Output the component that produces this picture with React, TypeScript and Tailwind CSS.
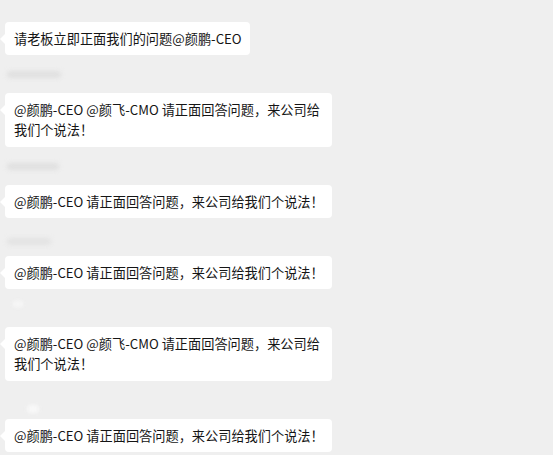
import type { ReactNode } from 'react';

type Msg = {
  lines: string[];
  // blurred sender name that sits above the bubble
  name?: { left: number; top: number; width: number; height: number; tone: string };
  width: string;
};

const MESSAGES: Msg[] = [
  { lines: ['请老板立即正面我们的问题@颜鹏-CEO'], width: 'w-[245px]' },
  {
    lines: ['@颜鹏-CEO @颜飞-CMO 请正面回答问题，来公司给', '我们个说法！'],
    name: { left: 2, top: 16, width: 54, height: 7, tone: 'bg-[#e0e0e0]' },
    width: 'w-[327px]',
  },
  {
    lines: ['@颜鹏-CEO 请正面回答问题，来公司给我们个说法！'],
    name: { left: 2, top: 16, width: 52, height: 7, tone: 'bg-[#e0e0e0]' },
    width: 'w-[327px]',
  },
  {
    lines: ['@颜鹏-CEO 请正面回答问题，来公司给我们个说法！'],
    name: { left: 2, top: 20, width: 44, height: 7, tone: 'bg-[#e3e3e3]' },
    width: 'w-[327px]',
  },
  {
    lines: ['@颜鹏-CEO @颜飞-CMO 请正面回答问题，来公司给', '我们个说法！'],
    name: { left: 8, top: 12, width: 10, height: 6, tone: 'bg-[#f8f8f8]' },
    width: 'w-[327px]',
  },
  {
    lines: ['@颜鹏-CEO 请正面回答问题，来公司给我们个说法！'],
    name: { left: 22, top: 24, width: 12, height: 8, tone: 'bg-[#f9f9f9]' },
    width: 'w-[327px]',
  },
];

function Bubble({ width, double, children }: { width: string; double: boolean; children: ReactNode }) {
  return (
    <div
      className={`relative ${width} bg-white rounded-[4px] pl-[9px] pr-[10px] pt-[7px] ${double ? 'pb-[7px]' : 'pb-[6px]'}`}
    >
      <span className="absolute left-[-5px] top-[12px] w-0 h-0 border-y-[5px] border-r-[5px] border-y-transparent border-r-white" />
      {children}
    </div>
  );
}

export default function App() {
  return (
    <div className="w-[553px] h-[455px] overflow-hidden bg-[#efefef] pt-[22px] pl-[5px] font-['Noto_Sans_CJK_SC',sans-serif] text-[13.2px] leading-[20px] text-[#151515]">
      {MESSAGES.map((m, i) => (
        <div key={i}>
          {m.name && (
            <div className="relative h-[38px]">
              <div
                className={`absolute rounded-full blur-[2px] ${m.name.tone}`}
                style={{ left: m.name.left, top: m.name.top, width: m.name.width, height: m.name.height }}
              />
            </div>
          )}
          <Bubble width={m.width} double={m.lines.length > 1}>
            {m.lines.map((l, j) => (
              <div key={j} className="whitespace-nowrap">
                {l}
              </div>
            ))}
          </Bubble>
        </div>
      ))}
    </div>
  );
}
